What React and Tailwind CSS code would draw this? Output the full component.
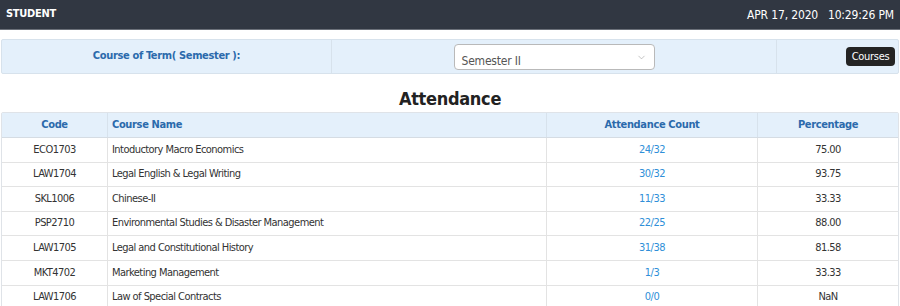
import { ChevronDown } from 'lucide-react';

const ROWS = [
  { code: 'ECO1703', name: 'Intoductory Macro Economics', count: '24/32', pct: '75.00' },
  { code: 'LAW1704', name: 'Legal English & Legal Writing', count: '30/32', pct: '93.75' },
  { code: 'SKL1006', name: 'Chinese-II', count: '11/33', pct: '33.33' },
  { code: 'PSP2710', name: 'Environmental Studies & Disaster Management', count: '22/25', pct: '88.00' },
  { code: 'LAW1705', name: 'Legal and Constitutional History', count: '31/38', pct: '81.58' },
  { code: 'MKT4702', name: 'Marketing Management', count: '1/3', pct: '33.33' },
  { code: 'LAW1706', name: 'Law of Special Contracts', count: '0/0', pct: 'NaN' },
];

const font = { fontFamily: "'DejaVu Sans Condensed', 'DejaVu Sans', sans-serif" };

export default function App() {
  return (
    <div className="w-[900px] h-[306px] overflow-hidden bg-white text-[11px] text-[#333]" style={font}>
      <header className="h-[30px] bg-[#313742] border-b border-[#6b7079] flex items-center justify-between pl-[6px] pr-[6px] text-white">
        <span className="font-bold text-[11px] tracking-tight">STUDENT</span>
        <span className="text-[12px] whitespace-pre tracking-[-0.15px]">APR 17, 2020   10:29:26 PM</span>
      </header>

      <div className="mt-[9px] mx-[1px] h-[35px] flex bg-[#e4f0fb] border border-[#d7e2ec] rounded-[2px]">
        <div className="w-[330px] flex items-center justify-center border-r border-[#d7e2ec] font-bold text-[#2b6aac] tracking-[-0.35px]">
          Course of Term( Semester ):
        </div>
        <div className="w-[445px] flex items-center justify-center border-r border-[#d7e2ec]">
          <div className="w-[201px] h-[26px] bg-white border border-[#b9b9b9] rounded-[4px] flex items-end pl-[7px] pb-[2px] relative">
            <span className="text-[12px] leading-none text-[#555] tracking-[-0.2px]">Semester II</span>
            <ChevronDown className="absolute right-[7px] top-[7px] text-[#999]" size={11} strokeWidth={1.25} />
          </div>
        </div>
        <div className="flex-1 flex items-center justify-end pr-[3px]">
          <button className="h-[19px] w-[49px] rounded-[4px] bg-[#242424] text-white text-[11px] leading-none tracking-[-0.3px]">
            Courses
          </button>
        </div>
      </div>

      <h1 className="text-center text-[18px] font-bold text-[#222] mt-[13px] leading-[24px] tracking-[-0.3px]">Attendance</h1>

      <div className="mx-[1px] mt-[1px] border border-[#dfe3e8] rounded-[2px]">
        <div className="flex h-[25px] bg-[#e4f0fb] border-b border-[#d5dce3] font-bold text-[#2b6aac] tracking-[-0.35px]">
          <div className="w-[106px] flex items-center justify-center border-r border-[#d7e2ec]">Code</div>
          <div className="w-[439px] flex items-center pl-[4px] border-r border-[#d7e2ec]">Course Name</div>
          <div className="w-[211px] flex items-center justify-center border-r border-[#d7e2ec]">Attendance Count</div>
          <div className="flex-1 flex items-center justify-center">Percentage</div>
        </div>
        {ROWS.map((r) => (
          <div key={r.code} className="flex h-[24.6px] border-b border-[#e3e3e3] tracking-[-0.55px]">
            <div className="w-[106px] flex items-center justify-center border-r border-[#e3e3e3]">{r.code}</div>
            <div className="w-[439px] flex items-center pl-[4px] border-r border-[#e3e3e3]">{r.name}</div>
            <div className="w-[211px] flex items-center justify-center border-r border-[#e3e3e3] text-[#2f8fd8]">{r.count}</div>
            <div className="flex-1 flex items-center justify-center">{r.pct}</div>
          </div>
        ))}
      </div>
    </div>
  );
}
